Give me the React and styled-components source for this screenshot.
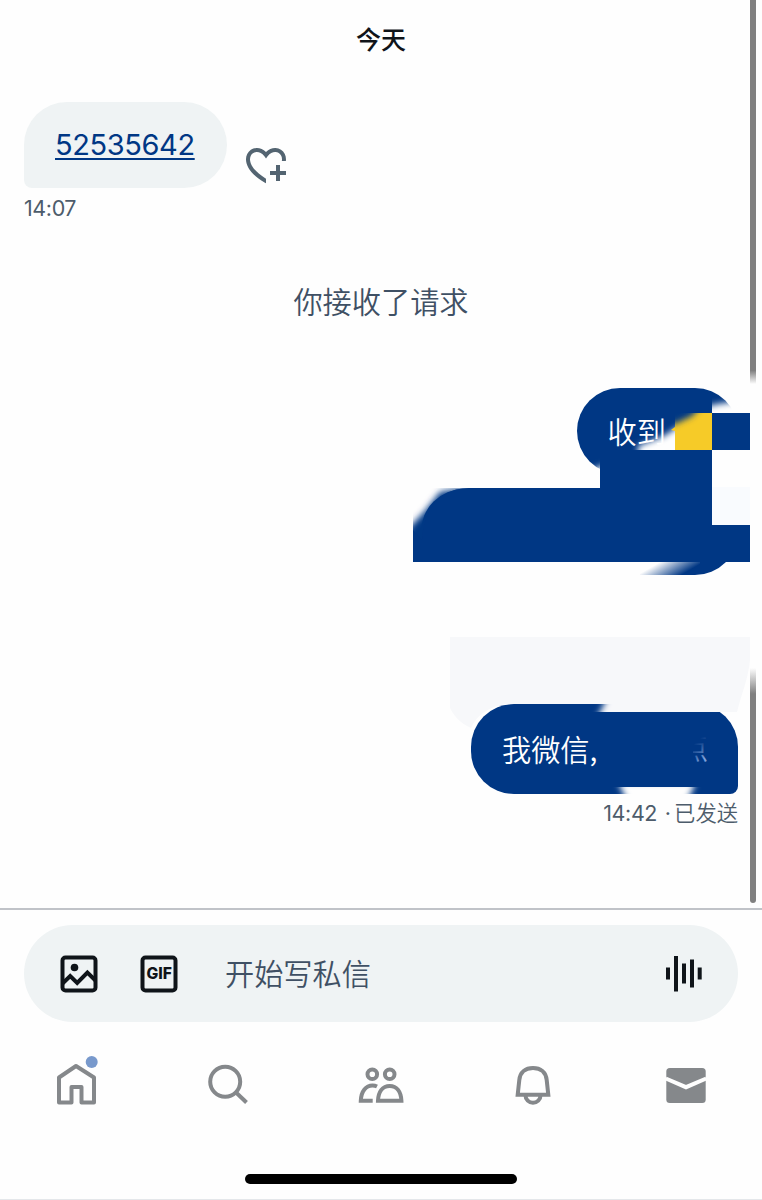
import React from "react";
import styled, { createGlobalStyle } from "styled-components";

const cjk = '"Noto Sans CJK SC"';
const BLUE = "#003784";

const GlobalStyle = createGlobalStyle`
  * { box-sizing: border-box; }
  body { margin: 0; background: #fefefe; }
`;

const Screen = styled.main`
  position: relative;
  display: flex;
  flex-direction: column;
  width: 762px;
  height: 1200px;
  overflow: hidden;
  background: #fefefe;
  border-bottom: 1px solid #e4e7ea;
  font-family: Inter, ${cjk}, sans-serif;
  color: #4d5c6b;
`;

const Thread = styled.section`
  display: flex;
  flex-direction: column;
  height: 910px;
  padding: 0 24px;
  border-bottom: 2px solid #c0c3c8;
`;

const DayLabel = styled.h1`
  margin: 18px 0 0;
  height: 40px;
  font: 500 25px/40px ${cjk}, sans-serif;
  text-align: center;
  color: #101419;
`;

const IncomingRow = styled.div`
  display: flex;
  align-items: flex-start;
  margin-top: 44px;
  gap: 15px;
`;

const Bubble = styled.div`
  display: flex;
  align-items: center;
  flex-shrink: 0;
  width: ${(p) => p.$width}px;
  height: ${(p) => p.$height || 86}px;
  margin-top: ${(p) => p.$top || 0}px;
  padding: 0 31px ${(p) => (p.$mine ? 2 : 0)}px;
  align-self: ${(p) => (p.$mine ? "flex-end" : "flex-start")};
  border-radius: ${(p) => (p.$mine ? `43px 43px ${p.$round ? 43 : 8}px 43px` : "43px 43px 43px 8px")};
  background: ${(p) => (p.$mine ? BLUE : "#eff3f4")};
  color: #fff;
  font: 350 29.2px/44px ${cjk}, sans-serif;
  white-space: nowrap;
`;

const NumberLink = styled.a`
  font: 400 29px/44px Inter, sans-serif;
  letter-spacing: ${(p) => p.$tracking}px;
  color: ${BLUE};
  text-decoration: underline;
  text-decoration-thickness: 2px;
  text-underline-offset: 3px;
  text-decoration-skip-ink: none;
`;

const Stamp = styled.time`
  display: flex;
  justify-content: ${(p) => (p.$mine ? "flex-end" : "flex-start")};
  margin-top: ${(p) => p.$top}px;
  font: 400 21.5px/28px Inter, ${cjk}, sans-serif;
  letter-spacing: -0.4px;
`;

const Dot = styled.span`
  width: 17px;
  padding-left: 4px;
  text-align: center;
`;

const Status = styled.span`
  font: 350 21.3px/28px ${cjk}, sans-serif;
  letter-spacing: 0;
  margin-top: -1px;
`;

const Notice = styled.p`
  margin: 56px 0 0;
  font: 350 29.2px/44px ${cjk}, sans-serif;
  text-align: center;
  color: #3f5064;
`;

const Icon = styled.svg`
  display: block;
  flex-shrink: 0;
  width: 48px;
  height: 48px;
  overflow: visible;
  fill: none;
  stroke: currentColor;
  stroke-width: 4;
  color: ${(p) => p.$color};
  margin-top: ${(p) => p.$top || 0}px;
`;

const Composer = styled.div`
  display: flex;
  align-items: center;
  gap: 32px;
  height: 97px;
  margin: 15px 24px 0;
  padding: 0 31px;
  border-radius: 49px;
  background: #eff3f4;
`;

const Placeholder = styled.span`
  flex: 1;
  margin: 0 0 4px 10px;
  font: 350 29.2px/44px ${cjk}, sans-serif;
  color: #3f5064;
`;

const Nav = styled.nav`
  display: grid;
  grid-template-columns: repeat(5, 1fr);
  justify-items: center;
  margin-top: 38px;
`;

const HomeBar = styled.div`
  width: 272px;
  height: 10px;
  margin: 66px auto 0;
  border-radius: 5px;
  background: #000;
`;

const Overlay = styled.svg`
  position: absolute;
  left: 0;
  top: 0;
  width: 762px;
  height: 908px;
  pointer-events: none;
`;

const GhostText = styled.text`
  font: 350 29.2px ${cjk}, sans-serif;
`;

const GifText = styled.text`
  font: 800 15.5px Inter, sans-serif;
  fill: currentColor;
  stroke: none;
`;

const ink = "#0f1419";
const gray = "#85888b";

function Smudges() {
  return (
    <Overlay viewBox="0 0 762 908">
      <defs>
        <filter id="soft" x="-30%" y="-30%" width="160%" height="160%">
          <feGaussianBlur stdDeviation="3" />
        </filter>
        <linearGradient id="barTop" x1="0" y1="0" x2="0" y2="1">
          <stop offset="0.965" stopColor="#808080" />
          <stop offset="1" stopColor="#808080" stopOpacity="0" />
        </linearGradient>
        <linearGradient id="barLow" x1="0" y1="0" x2="0" y2="1">
          <stop offset="0" stopColor="#808080" stopOpacity="0" />
          <stop offset="0.11" stopColor="#808080" />
        </linearGradient>
        <linearGradient id="ghost" gradientUnits="userSpaceOnUse" x1="694" y1="744" x2="706" y2="757">
          <stop offset="0" stopColor="#5f86c4" stopOpacity="0" />
          <stop offset="0.3" stopColor="#5f86c4" stopOpacity="0.3" />
          <stop offset="1" stopColor="#7fa2da" />
        </linearGradient>
        <linearGradient id="footFade" gradientUnits="userSpaceOnUse" x1="660" y1="562" x2="671" y2="581">
          <stop offset="0" stopColor="#fefefe" />
          <stop offset="1" stopColor="#fefefe" stopOpacity="0" />
        </linearGradient>
        <clipPath id="corner"><rect x="712" y="386" width="38" height="27" /></clipPath>
        <clipPath id="cell"><rect x="675" y="413" width="37" height="37" /></clipPath>
        <clipPath id="pale"><rect x="625" y="413" width="50" height="37" /></clipPath>
        <clipPath id="edge"><rect x="413" y="488" width="60" height="74" /></clipPath>
        <clipPath id="notch"><rect x="576" y="440" width="24" height="48" /></clipPath>
        <clipPath id="lip"><rect x="590" y="703" width="146" height="9" /></clipPath>
        <clipPath id="base"><rect x="600" y="787" width="110" height="8" /></clipPath>
        <clipPath id="trace"><rect x="693" y="736" width="16" height="30" /></clipPath>
      </defs>

      <path d="M750 0H756V384H750Z" fill="url(#barTop)" />
      <path d="M750 668H756V900a3 3 0 0 1-6 0Z" fill="url(#barLow)" />

      <g clipPath="url(#corner)"><path d="M700 408L718 404L750 399V430H700Z" fill="#fefefe" filter="url(#soft)" /></g>
      <path d="M600 450H712V488H600Z" fill={BLUE} />
      <path d="M712 413H750V450H712Z" fill={BLUE} />
      <path d="M712 450H750V487H712Z" fill="#fefefe" />
      <path d="M712 487H750V525H712Z" fill="#f9fbfe" />
      <path d="M473 488H712V562H473Z" fill={BLUE} />
      <path d="M712 525H750V562H712Z" fill={BLUE} />
      <g clipPath="url(#notch)"><path d="M610 463V496H580V474Z" fill="#fefefe" filter="url(#soft)" /></g>

      <g clipPath="url(#pale)"><path d="M638 446L664 436L688 420V460H638Z" fill="#fefefe" filter="url(#soft)" /></g>
      <g clipPath="url(#cell)">
        <path d="M675 413H712V450H675Z" fill="#f6cb28" />
        <path d="M655 395H712L692 416L675 424H655Z" fill={BLUE} filter="url(#soft)" />
      </g>
      <path d="M671 430l4-3v4Z" fill="#f6cb28" />

      <g clipPath="url(#edge)">
        <path d="M408 529L425 511L440 492L480 485V566H408Z" fill={BLUE} filter="url(#soft)" />
        <path d="M422 540C423 510 440 488 469 488H475V562H413V530Z" fill={BLUE} />
      </g>
      <path d="M410 562H700V576H410Z" fill="url(#footFade)" />
      <path d="M410 562H640V576H410Z" fill="#fefefe" />

      <path d="M450 637H750V660C748 680 741 695 737 712H724C716 707 708 704 695 704H514C492 704 477 714 471 728C460 723 454 716 450 708Z" fill="#f7f8fa" />
      <g clipPath="url(#lip)"><path d="M611 690H760V720H596Z" fill="#f7f8fa" filter="url(#soft)" /></g>
      <g clipPath="url(#base)"><path d="M618 782H696L682 812H632Z" fill="#fefefe" filter="url(#soft)" /></g>
      <g clipPath="url(#trace)"><GhostText x="679" y="759" fill="url(#ghost)">点</GhostText></g>
    </Overlay>
  );
}

export default function App() {
  return (
    <>
      <GlobalStyle />
      <Screen>
        <Thread>
          <DayLabel>今天</DayLabel>
          <IncomingRow>
            <Bubble $width={203}><NumberLink $tracking={-0.4}>52535642</NumberLink></Bubble>
            <Icon viewBox="0 0 24 24" $top={39} $color="#536471">
              <path fill="currentColor" stroke="none" d="M17 12v3h-2.998v2h3v3h2v-3h3v-2h-3.001v-3H17zm-5 6.839c-3.871-2.34-6.053-4.639-7.127-6.609-1.112-2.04-1.031-3.7-.479-4.82.561-1.13 1.667-1.84 2.91-1.91 1.222-.06 2.68.51 3.892 2.16l.806 1.09.805-1.09c1.211-1.65 2.668-2.22 3.89-2.16 1.242.07 2.347.78 2.908 1.91.334.677.49 1.554.321 2.59h2.011c.153-1.283-.039-2.469-.539-3.48-.887-1.79-2.647-2.91-4.601-3.01-1.65-.09-3.367.56-4.796 2.01-1.43-1.45-3.147-2.1-4.798-2.01-1.954.1-3.714 1.22-4.601 3.01-.896 1.81-.846 4.17.514 6.67 1.353 2.48 4.003 5.12 8.382 7.67l.502.299v-2.32z" />
            </Icon>
          </IncomingRow>
          <Stamp $top={5}>14:07</Stamp>
          <Notice>你接收了请求</Notice>
          <Bubble $mine $width={161.5} $top={65.5}>收到</Bubble>
          <Bubble $mine $round $width={317} $top={15} />
          <Bubble $mine $width={267} $height={90} $top={129}>我微信,</Bubble>
          <Stamp $mine $top={5}><span>14:42</span><Dot>·</Dot><Status>已发送</Status></Stamp>
        </Thread>

        <Composer>
          <Icon viewBox="0 0 48 48" $color={ink}>
            <rect x="7.5" y="7.5" width="33" height="33" rx="3" />
            <circle cx="19.5" cy="17.5" r="3.8" fill="currentColor" stroke="none" />
            <path d="M7.5 33.5L15.2 26L22.2 33L32.4 22.5L40.5 30.5" />
          </Icon>
          <Icon viewBox="0 0 48 48" $color={ink}>
            <rect x="7.5" y="7.5" width="33" height="33" rx="3" />
            <GifText x="11.5" y="29.2" textLength="25.5" lengthAdjust="spacingAndGlyphs">GIF</GifText>
          </Icon>
          <Placeholder>开始写私信</Placeholder>
          <Icon viewBox="0 0 48 48" $color={ink}>
            <path d="M9 17.5V29.5M17 6V41.5M25 13.5V33.5M33 9.5V37.5M40.7 17.5V29.5" />
          </Icon>
        </Composer>

        <Nav>
          <Icon viewBox="0 0 48 48" $color={gray}>
            <path strokeLinejoin="round" d="M24 6L42 17.5V42.5H29.5V27H19.5V42.5H7V17.5Z" />
            <circle cx="39.7" cy="2" r="6" fill="#7899cc" stroke="none" />
          </Icon>
          <Icon viewBox="0 0 48 48" $color={gray}>
            <circle cx="20.2" cy="21.8" r="15" />
            <path d="M30.5 32L41.5 42.5" />
          </Icon>
          <Icon viewBox="0 0 48 48" $color={gray}>
            <circle cx="15.3" cy="14.3" r="4.8" />
            <circle cx="32.7" cy="14.3" r="4.8" />
            <path d="M21 40.7C21.4 32 25.5 26 32.7 26S44 32 44.4 40.7Z" />
            <path d="M15.7 40.7H3.8C4.2 31 9 25.5 15.5 25.5C17.2 25.5 18.6 25.8 20 26.5" />
          </Icon>
          <Icon viewBox="0 0 48 48" $color={gray}>
            <path d="M8.7 34.7L10.3 20C11.1 12 16.5 8 24 8S36.9 12 37.7 20L39.3 34.7Z" />
            <path d="M16.5 35.5A7.5 7.2 0 0 0 31.5 35.5" />
          </Icon>
          <Icon viewBox="0 0 48 48" $color={gray}>
            <rect x="4.3" y="8" width="39.4" height="35" rx="3.5" fill="currentColor" stroke="none" />
            <path d="M3.8 18.5L24 27.2L44.2 18.5" stroke="#fefefe" />
          </Icon>
        </Nav>
        <HomeBar />
        <Smudges />
      </Screen>
    </>
  );
}
